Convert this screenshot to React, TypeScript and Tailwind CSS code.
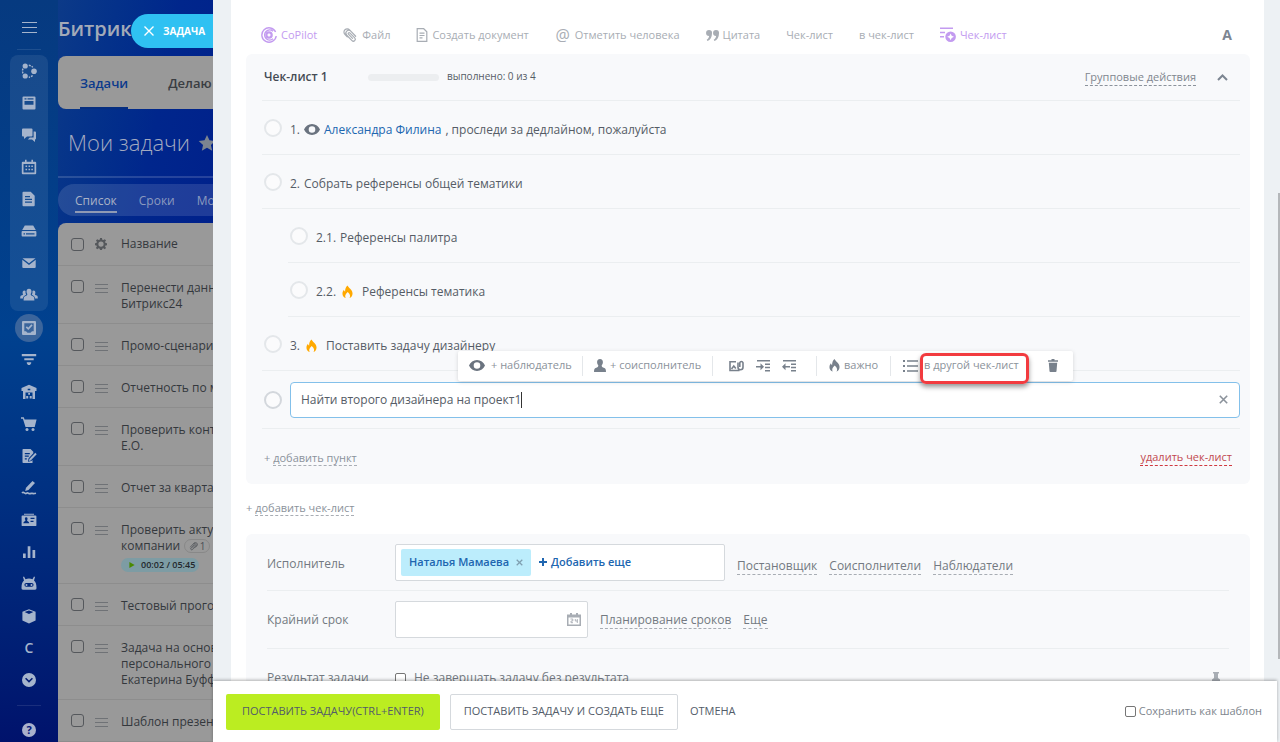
import type { ReactNode } from 'react';
import clsx from 'clsx';

type IconProps = { children: ReactNode; className?: string; size?: string };

function Icon({ children, className = 'size-4', size = '0 0 16 16' }: IconProps) {
  return (
    <svg viewBox={size} className={clsx('shrink-0', className)} fill="currentColor" aria-hidden="true">
      {children}
    </svg>
  );
}

/* Left menu glyphs */
const groupIcons = [
  {
    label: 'Лента',
    art: (
      <>
        <circle cx="4.2" cy="3" r="2.6" />
        <circle cx="13" cy="8.2" r="2.8" />
        <circle cx="4.2" cy="13" r="2.6" />
        <path d="M7.8 2.2a6 6 0 0 1 4 2.2M11.6 12.4a6 6 0 0 1-3.8 1.8M2 5.6a6 6 0 0 0 0 4.8" fill="none" stroke="currentColor" strokeWidth="1.4" strokeDasharray="2 1" />
      </>
    ),
  },
  {
    label: 'Доска',
    art: <path fillRule="evenodd" d="M2.5 1.5h11a1 1 0 0 1 1 1v11a1 1 0 0 1-1 1h-11a1 1 0 0 1-1-1v-11a1 1 0 0 1 1-1ZM3.5 3.3v1.2h2V3.3Zm3 0v1.2h6V3.3ZM3.5 6v3.8h9V6Z" />,
  },
  {
    label: 'Чат',
    art: <path d="M2 1.5h8.5a1 1 0 0 1 1 1v6a1 1 0 0 1-1 1H6L3 12V9.500H2a1 1 0 0 1-1-1v-6a1 1 0 0 1 1-1Zm10.600 3H14a1 1 0 0 1 1 1v6a1 1 0 0 1-1 1v2.500l-3-2.500H6.800l2-2h3.800Z" />,
  },
  {
    label: 'Календарь',
    art: <path fillRule="evenodd" d="M4 .8h1.600v2h4.800v-2H12v2h2.200a1 1 0 0 1 1 1v10.400a1 1 0 0 1-1 1H1.800a1 1 0 0 1-1-1V3.800a1 1 0 0 1 1-1H4ZM2.500 5v8.500h11V5ZM7.500 6.500h1.600V8H7.500Zm2.800 0h1.600V8h-1.600ZM4.500 9.800h1.600v1.500H4.500Zm3 0h1.600v1.500H7.500Zm2.800 0h1.600v1.500h-1.600ZM4.500 6.500h1.600V8H4.500Z" />,
  },
  {
    label: 'Документы',
    art: <path fillRule="evenodd" d="M2.500.8h7.200l4 4v9.400a1 1 0 0 1-1 1H2.500a1 1 0 0 1-1-1V1.800a1 1 0 0 1 1-1ZM4 5v1.200h5V5Zm0 2.800V9h7V7.800Zm0 2.800v1.200h7v-1.200Z" />,
  },
  {
    label: 'Диск',
    art: <path fillRule="evenodd" d="M3.800 2.500h8.400l2.600 4.500H1.200ZM1.500 8h13a.9.900 0 0 1 .9.900v3.700a.9.900 0 0 1-.9.900h-13a.9.900 0 0 1-.9-.9V8.900a.9.900 0 0 1 .9-.9Zm1 2.200v1.200h1.500v-1.200Zm2.500 0v1.200h8.500v-1.200Z" />,
  },
  {
    label: 'Почта',
    art: <path d="M1.500 3.200h13L8 8.300ZM1.300 4.700 8 9.900l6.700-5.200v7.400a1 1 0 0 1-1 1H2.300a1 1 0 0 1-1-1Z" />,
  },
  {
    label: 'Группы',
    art: (
      <path d="M8 1.800c1.700 0 2.600 1.200 2.500 2.900 0 1-.4 1.800-.8 2.400 0 1.200.3 1.500 2.300 2.200 1 .4 1.300 1 1.400 4.200H2.600c.1-3.200.4-3.800 1.400-4.200 2-.7 2.300-1 2.300-2.200-.4-.6-.8-1.400-.8-2.400 0-1.700.8-2.900 2.500-2.900ZM3.300 3.500c.6 0 1 .2 1.300.5-.3 1.300 0 2.600.6 3.600 0 .8-3 1-3.300 3.900H-.8c0-2.200.3-2.600 1-2.900 1.300-.5 1.800-.7 1.800-1.300-.5-.8-.8-3.800 1.300-3.800Zm9.400 0c-.6 0-1 .2-1.300.5.3 1.300 0 2.600-.6 3.600 0 .8 3 1 3.300 3.900h2.700c0-2.200-.3-2.600-1-2.900-1.300-.5-1.800-.7-1.800-1.300.5-.8.8-3.800-1.300-3.800Z" />
    ),
  },
];

const lowerIcons = [
  { label: 'CRM', art: <path d="M.8 2h14.400v2.200H.8Zm2.500 4.300h9.400v2H3.300Zm2.500 4h4.400v1L9 13H7l-1.200-1.700Z" /> },
  {
    label: 'Склад',
    art: <path fillRule="evenodd" d="M8 .8 15.500 4v3H14v8h-2.500V8.500h-7V15H2V7H.5V4Zm-1.300 4v1.500h2.600V4.800ZM7.200 9h1.800v1.800H7.200Zm-2 3h2v2.500h-2Zm3.500 0h2v2.500h-2Z" />,
  },
  {
    label: 'Магазин',
    art: (
      <>
        <path d="M0 1.200h2.800l.8 2.200h12L13.700 11H4.500L1.900 2.800H0Z" />
        <circle cx="6" cy="13.500" r="1.500" />
        <circle cx="12" cy="13.500" r="1.500" />
      </>
    ),
  },
  {
    label: 'Подпись',
    art: (
      <>
        <path fillRule="evenodd" d="M2.300 1h7.200l2.800 2.800v1.400L7.500 10.500 7 13.800l3.300-.8 1.200-1.100V15H2.300a.8.800 0 0 1-.8-.8V1.800a.8.800 0 0 1 .8-.8ZM3.800 5v1.200h5V5Zm0 2.600v1.200h4V7.600Zm0 2.600v1.200h2v-1.200Z" />
        <path d="m14.300 4.800 1.400 1.400-6 6.200-1.800.5.400-1.900Z" />
      </>
    ),
  },
  {
    label: 'КЭДО',
    art: (
      <>
        <path d="m11.500 1 2.500 2-6.500 7-3.300 1 .8-3.300Z" />
        <path d="M1 13c2-2 2.500 1.500 4.500.3s2 1 3.700.3 2.300.5 5.800-.4" fill="none" stroke="currentColor" strokeWidth="1.700" />
      </>
    ),
  },
  {
    label: 'Контакты',
    art: <path fillRule="evenodd" d="M3 1.800h10v1H3Zm-1.500 1.600h13a.9.900 0 0 1 .9.900v8.900a.9.900 0 0 1-.9.900h-13a.9.900 0 0 1-.9-.9V4.300a.9.900 0 0 1 .9-.9ZM5.200 5.300c-1.600 0-1.700 2-.7 3-.2 1.300-2 .9-2.200 3h5.900c-.2-2.100-2-1.700-2.200-3 1-1 .8-3-.8-3Zm4.300.5v1.300h4V5.800Zm0 3v1.300h3V8.800Z" />,
  },
  { label: 'Отчеты', art: <path d="M2 9.500h2.700V14H2Zm4.700-7.300h2.700V14H6.700ZM11.500 6h2.700v8h-2.700Z" /> },
  {
    label: 'Роботы',
    art: <path fillRule="evenodd" d="m3 .5 1.500 2.800a9 9 0 0 1 7 0L13 .5l1 .5-1 3.500c1.700 1.500 2.500 3.500 2.500 7.500a1.500 1.500 0 0 1-1.500 1.700H2A1.500 1.500 0 0 1 .5 12c0-4 .8-6 2.500-7.500L2 1Zm2.300 6.400a1.900 1.900 0 0 0 0 3.800h5.400a1.900 1.900 0 0 0 0-3.800Zm.2 1a1 1 0 1 1 0 2 1 1 0 0 1 0-2Zm5 0a1 1 0 1 1 0 2 1 1 0 0 1 0-2Z" />,
  },
  { label: 'Маркет', art: <path fillRule="evenodd" d="m8 1.200 6.600 2.500v8.700L8 15.400l-6.600-3V3.700Zm0 1.300L3.600 4.100 8 6l4.400-1.900Z" /> },
];

function SideButton({ label, children, active }: { label: string; children: ReactNode; active?: boolean }) {
  return (
    <button aria-label={label} className="flex h-8 w-full shrink-0 items-center justify-center">
      <span className={clsx('flex size-7 items-center justify-center rounded-full', active && 'bg-[#3b659c]')}>
        {children}
      </span>
    </button>
  );
}

function Sidebar() {
  return (
    <nav className="flex w-[58px] shrink-0 flex-col items-center overflow-hidden bg-linear-to-b from-[#063a80] via-[#00418f] via-45% to-[#00126c] text-[#a5b4cc]">
      <button aria-label="Меню" className="mt-[22px] flex w-[15px] shrink-0 flex-col gap-1">
        <span className="h-px w-full bg-current" />
        <span className="h-px w-full bg-current" />
        <span className="h-px w-full bg-current" />
      </button>
      <span className="mt-4 h-px w-6 shrink-0 bg-white/10" />
      <div className="mt-[5px] mb-px w-[38px] shrink-0 rounded-lg bg-white/8">
        {groupIcons.map((i) => (
          <SideButton key={i.label} label={i.label}>
            <Icon className="size-4 overflow-visible">{i.art}</Icon>
          </SideButton>
        ))}
      </div>
      <SideButton label="Задачи" active>
        <Icon>
          <path fillRule="evenodd" d="M2 1h12a1 1 0 0 1 1 1v12a1 1 0 0 1-1 1H2a1 1 0 0 1-1-1V2a1 1 0 0 1 1-1Zm1.300 2.200v8H5l1.500 1.600h3L11 11.200h1.700v-8Z" />
          <path d="m5.300 6.800 2 2L11 4.900" fill="none" stroke="currentColor" strokeWidth="1.700" />
        </Icon>
      </SideButton>
      {lowerIcons.map((i) => (
        <SideButton key={i.label} label={i.label}>
          <Icon className="size-4">{i.art}</Icon>
        </SideButton>
      ))}
      <SideButton label="Сайты">
        <span className="text-sm font-semibold">С</span>
      </SideButton>
      <SideButton label="Еще">
        <Icon className="size-[14px]">
          <path fillRule="evenodd" d="M8 0a8 8 0 1 1 0 16A8 8 0 0 1 8 0ZM3.500 6.500 8 11l4.500-4.500-1.200-1.200L8 8.600 4.700 5.300Z" />
        </Icon>
      </SideButton>
      <span className="my-[9px] h-px w-6 shrink-0 bg-white/10" />
      <button aria-label="Помощь" className="mt-2 flex size-[14px] shrink-0 items-center justify-center rounded-full bg-[#a9b1cc] text-[11px] font-bold text-[#00157a]">
        ?
      </button>
    </nav>
  );
}

const tasks = [
  { lines: ['Перенести данн', 'Битрикс24'] },
  { lines: ['Промо-сценари'] },
  { lines: ['Отчетность по м'] },
  { lines: ['Проверить конт', 'Е.О.'] },
  { lines: ['Отчет за кварта'] },
  { lines: ['Проверить акту', 'компании'], timer: true },
  { lines: ['Тестовый прого'] },
  { lines: ['Задача на основ', 'персонального', 'Екатерина Буфф'] },
  { lines: ['Шаблон презен'] },
];

function GrayCheck({ label }: { label: string }) {
  return (
    <input
      type="checkbox"
      aria-label={label}
      className="size-[13px] shrink-0 appearance-none rounded-[3px] border border-[#55585c]"
    />
  );
}

function PaperClip({ className }: { className?: string }) {
  return (
    <Icon className={className}>
      <path
        d="M13.500 8.800 8.300 3.400a3 3 0 0 0-4.300 4.300l5.600 5.700a2 2 0 0 0 2.900-2.900L7.200 5.200a.9.900 0 0 0-1.400 1.400l4.400 4.500M8.300 3.400 7 2a3.400 3.400 0 0 0-5 4.800l2.500 2.600"
        fill="none"
        stroke="currentColor"
        strokeWidth="1.300"
        strokeLinecap="round"
      />
    </Icon>
  );
}

function TaskList() {
  return (
    <div className="w-[155px] shrink-0 overflow-hidden bg-linear-to-br from-[#0c3a88] via-[#00268c] via-40% to-[#00188a] whitespace-nowrap">
      <div className="h-14 pt-[15px] text-xl leading-7 font-semibold text-[#a3aab8]">Битрикс24</div>
      <div className="flex h-[53px] rounded-l-lg bg-[#999] text-[13px] font-semibold">
        <a href="#tasks" className="ml-[22px] flex items-center border-b-2 border-[#062e80] pt-1 text-[#0b3a8c]">
          Задачи
        </a>
        <a href="#doing" className="ml-10 flex items-center border-b-2 border-transparent pt-1 text-[#3a3d42]">
          Делаю
        </a>
      </div>
      <div className="flex h-[69px] items-center gap-2 border-b-2 border-white/15 pl-[10px]">
        <h1 className="text-[22px] font-light text-[#a3aac0]">Мои задачи</h1>
        <Icon className="size-[18px] text-[#7b8490]">
          <path d="m8 .8 2.200 4.800 5.200.6-3.900 3.500 1.100 5.200L8 12.300l-4.600 2.600 1.100-5.200L.6 6.200l5.200-.6Z" />
        </Icon>
      </div>
      <div className="mt-1.5 flex h-8 items-center gap-[22px] rounded-l-full bg-white/12 pt-1 pl-[17px] text-xs leading-5 text-[#8b9abf]">
        <a href="#list" className="border-b-2 border-[#8f9ab5] text-[#a9b2c6]">
          Список
        </a>
        <a href="#terms" className="border-b-2 border-transparent">
          Сроки
        </a>
        <a href="#plan" className="border-b-2 border-transparent">
          Мой план
        </a>
      </div>
      <div className="mt-[7px] rounded-tl-lg bg-[#999] text-xs leading-4 text-[#34383d]">
        <div className="flex h-[43px] items-center border-b border-[#8d8d8d] pl-[13px]">
          <GrayCheck label="Выбрать все" />
          <Icon className="ml-[11px] size-3 text-[#55585c]">
            <path fillRule="evenodd" d="M6.700 0h2.600l.4 2.200 1.500.6L13 1.500 14.700 3.300l-1.300 1.800.6 1.500 2 .4v2.500l-2 .4-.6 1.500 1.300 1.800-1.800 1.700-1.800-1.200-1.500.6-.3 2H6.700l-.4-2-1.500-.6L3 15l-1.800-1.800 1.300-1.800-.6-1.500-1.900-.4V7l1.900-.4.600-1.500L1.300 3.300 3 1.500l1.800 1.300 1.500-.6ZM8 4.600a3.500 3.500 0 1 0 0 7 3.500 3.500 0 0 0 0-7Z" />
          </Icon>
          <span className="ml-[14px]">Название</span>
        </div>
        {tasks.map((task) => (
          <div key={task.lines[0]} className="flex items-start border-b border-[#8d8d8d] pt-[14px] pb-[11px] pl-[13px]">
            <GrayCheck label={task.lines[0]} />
            <span className="mt-[4px] ml-[11px] flex w-[13px] shrink-0 flex-col gap-[3px] text-[#6f7276]">
              <span className="h-px bg-current" />
              <span className="h-px bg-current" />
              <span className="h-px bg-current" />
            </span>
            <div className="ml-[13px]">
              {task.lines.map((line, i) => (
                <div key={line} className="flex items-center gap-1">
                  {line}
                  {task.timer && i === 1 && (
                    <span className="flex h-[14px] w-[26px] items-center justify-center gap-0.5 rounded-full border border-[#888] text-[10px] text-[#4b4f55]">
                      <PaperClip className="size-[9px] -scale-x-100" />1
                    </span>
                  )}
                </div>
              ))}
              {task.timer && (
                <span className="mt-1 flex h-[14px] w-[78px] items-center gap-1.5 rounded-full bg-[#7d9ca4] pl-2 text-[9px] font-semibold text-[#23282c]">
                  <Icon className="size-[6px] text-[#4a8a00]">
                    <path d="M1 0v16l14-8Z" />
                  </Icon>
                  00:02 / 05:45
                </span>
              )}
            </div>
          </div>
        ))}
      </div>
    </div>
  );
}

function Eye() {
  return (
    <Icon className="h-[11px] w-4 text-[#6a737f]" size="0 0 16 11">
      <path fillRule="evenodd" d="M8 0c3.700 0 6.500 2.300 8 5.500C14.500 8.700 11.700 11 8 11S1.500 8.700 0 5.500C1.500 2.300 4.300 0 8 0Zm0 2.200a3.300 3.300 0 1 0 0 6.600 3.300 3.300 0 0 0 0-6.600Z" />
    </Icon>
  );
}

function Flame({ className }: { className: string }) {
  return (
    <Icon className={className} size="0 0 12 14">
      <path d="M6.200 0c.3 2.400 5.300 4.400 5.300 8.600 0 2.500-1.400 4.300-3.400 5 1.200-1.500 1.300-3.700-1.900-6.600C3.300 9.600 3 12 4.100 13.600 2 13 .5 11.200.5 8.800c0-2 1-3.100 1.600-4.200.3 1.300.7 1.700 1.300 2C3.300 4.200 4.200 1.200 6.200 0Z" />
    </Icon>
  );
}

function Toolbar() {
  return (
    <div className="flex h-[54px] shrink-0 items-center gap-[26px] pt-4 pr-[18px] pl-[15px] text-[11px] whitespace-nowrap text-[#a8adb4]">
      <button className="flex items-center gap-1 text-[#c39bf0]">
        <Icon>
          <path d="M14.600 5A7.200 7.200 0 1 0 15.200 9M12 4.300A5 5 0 1 0 12 11.700" fill="none" stroke="currentColor" strokeWidth="1.400" />
          <path fillRule="evenodd" d="M8 4.200a3.800 3.800 0 1 1 0 7.600 3.800 3.800 0 0 1 0-7.600Zm0 1.500L7.200 7.200 5.700 8l1.500.8L8 10.300l.8-1.500 1.500-.8-1.500-.8Z" />
        </Icon>
        CoPilot
      </button>
      <button className="flex items-center gap-1">
        <PaperClip className="size-[15px]" />
        Файл
      </button>
      <button className="flex items-center gap-1">
        <Icon className="h-[14px] w-3" size="0 0 12 14">
          <path d="M1.200.7h6.500l3.100 3v9.600H1.200ZM3.500 5.200h5M3.500 7.500h5M3.500 9.800h3" fill="none" stroke="currentColor" strokeWidth="1.200" />
        </Icon>
        Создать документ
      </button>
      <button className="flex items-center gap-1">
        <span className="w-4 text-base leading-4">@</span>
        Отметить человека
      </button>
      <button className="flex items-center gap-1">
        <Icon className="h-[11px] w-[13px]" size="0 0 13 11">
          <path d="M3 0a3 3 0 0 1 3 3.200C6 7 4.300 10 1.500 11L.7 9.700C2.300 8.800 3 7.500 3.100 6A3 3 0 0 1 3 0Zm7 0a3 3 0 0 1 3 3.200C13 7 11.300 10 8.500 11l-.8-1.300C9.300 8.800 10 7.500 10.100 6A3 3 0 0 1 10 0Z" />
        </Icon>
        Цитата
      </button>
      <button>Чек-лист</button>
      <button>в чек-лист</button>
      <button className="flex items-center gap-1 text-[#c39bf0]">
        <Icon>
          <path d="M0 .5h13V2H0Zm0 4.300h5v1.500H0ZM0 9h4v1.500H0Z" />
          <path fillRule="evenodd" d="M10.600 4.500a5.300 5.300 0 1 1 0 10.600 5.300 5.300 0 0 1 0-10.600Zm0 1.900L9.500 8.700l-2.300 1.100 2.300 1.100 1.100 2.300 1.100-2.300L14 9.800l-2.300-1.100Z" />
        </Icon>
        Чек-лист
      </button>
      <button className="ml-auto text-sm font-bold text-[#7c8591]">А</button>
    </div>
  );
}

function Ring({ label, dark }: { label: string; dark?: boolean }) {
  return (
    <input
      type="checkbox"
      aria-label={label}
      className={clsx(
        'size-[18px] shrink-0 appearance-none rounded-full border-2 bg-white/40',
        dark ? 'border-[#d3d7dc]' : 'border-[#e4e7ea]',
      )}
    />
  );
}

function CheckItem({ num, nested, children }: { num: string; nested?: boolean; children: ReactNode }) {
  return (
    <div className={clsx('flex h-[54px] items-center border-b border-[#ebeef0] pl-[2px]', nested && 'ml-[26px]')}>
      <Ring label={'Пункт ' + num} />
      <div className="ml-2 flex items-center gap-1 pt-1">
        <span>{num}</span>
        {children}
      </div>
    </div>
  );
}

const dashed = 'border-b border-dashed';

function ItemMenu() {
  return (
    <div className="absolute bottom-[37px] left-[168px] flex h-[30px] w-[615px] items-center rounded-xs bg-white text-[11px] whitespace-nowrap text-[#8b929b] shadow-[0_1px_4px_rgba(0,0,0,0.15)]">
      <button className="flex h-5 w-[125px] items-center gap-1.5 border-r border-[#e4e7ea] pl-[11px]">
        <Eye />+ наблюдатель
      </button>
      <button className="flex h-5 w-[130px] items-center gap-1 border-r border-[#e4e7ea] pl-[11px]">
        <Icon className="h-[13px] w-3 text-[#78818c]" size="0 0 12 13">
          <path d="M6 0c2 0 3 1.300 2.900 3.200 0 1.300-.6 2.300-1.200 3 0 1.800.5 2 2.700 2.800 1.200.5 1.500 1.200 1.600 4H0c.1-2.800.4-3.500 1.600-4 2.200-.8 2.700-1 2.700-2.800-.6-.7-1.200-1.700-1.200-3C3 1.300 4 0 6 0Z" />
        </Icon>
        + соисполнитель
      </button>
      <div className="flex h-5 w-[104px] items-center gap-3 border-r border-[#e4e7ea] pl-4 text-[#78818c]">
        <button aria-label="Прикрепить файл">
          <Icon className="h-3 w-[15px]" size="0 0 15 12">
            <path d="M7 1.800H1v8.700h9.500M2.500 9l2.300-3 2 2.500M9 2.500v4.800a2.500 2.500 0 0 0 5 0V2.700a1.700 1.700 0 0 0-3.200 0V7" fill="none" stroke="currentColor" strokeWidth="1.600" />
          </Icon>
        </button>
        <button aria-label="Увеличить отступ">
          <Icon className="h-3 w-[14px]" size="0 0 14 12">
            <path d="M1 0h13v1.500H1Zm8 3.500h5V5H9Zm0 3.300h5v1.500H9Zm0 3.300h5v1.500H9ZM4.500 3.200 8 6.700l-3.500 3.500V7.500H0V6h4.500Z" />
          </Icon>
        </button>
        <button aria-label="Уменьшить отступ">
          <Icon className="h-3 w-[14px]" size="0 0 14 12">
            <path d="M1 0h13v1.500H1Zm8 3.500h5V5H9Zm0 3.300h5v1.500H9Zm0 3.300h5v1.500H9ZM3.500 3.200 0 6.700l3.500 3.500V7.500H8V6H3.500Z" />
          </Icon>
        </button>
      </div>
      <button className="flex h-5 w-[74px] items-center gap-1 border-r border-[#e4e7ea] pl-3">
        <Flame className="h-[13px] w-[11px] text-[#78818c]" />
        важно
      </button>
      <button className="flex items-center gap-1.5 pl-3">
        <Icon className="h-3 w-[15px] text-[#78818c]" size="0 0 15 12">
          <path d="M0 0h2v2H0Zm4 .2h11v1.500H4ZM0 5h2v2H0Zm4 .2h11v1.500H4ZM0 10h2v2H0Zm4 .2h11v1.500H4Z" />
        </Icon>
        <span className="relative">
          в другой чек-лист
          <span className="absolute -top-[5px] -right-[10px] -bottom-[11px] -left-1 rounded-md border-3 border-[#f23b3f] shadow-[0_3px_5px_rgba(0,0,0,0.4)]" />
        </span>
      </button>
      <button aria-label="Удалить" className="mr-[15px] ml-auto text-[#78818c]">
        <Icon className="h-[13px] w-[10px]" size="0 0 10 13">
          <path d="M3.500 0h3v1.200H10v1.600H0V1.200h3.500ZM.8 3.800h8.400l-.7 8.400a.9.900 0 0 1-.9.800H2.400a.9.900 0 0 1-.9-.8Z" />
        </Icon>
      </button>
    </div>
  );
}

function Checklist() {
  return (
    <section className="shrink-0 rounded-md bg-[#f8f9fb] pr-[10px] pb-[18px] pl-4 text-xs text-[#555c66]">
      <div className="flex h-[47px] items-center border-b border-[#ebeef0] pr-3 pl-[2px]">
        <h2 className="w-[104px] font-semibold whitespace-nowrap text-[#454b54]">Чек-лист 1</h2>
        <span className="h-[7px] w-[71px] rounded-full bg-[#eceef0]" />
        <span className="ml-2 text-[10px]">выполнено: 0 из 4</span>
        <button className={clsx(dashed, 'ml-auto border-[#8b929b] text-[11px] leading-4 text-[#80868e]')}>
          Групповые действия
        </button>
        <button aria-label="Свернуть" className="ml-[21px]">
          <Icon className="h-[7px] w-[11px] text-[#7c8591]" size="0 0 11 7">
            <path d="M1 6 5.500 1.500 10 6" fill="none" stroke="currentColor" strokeWidth="2" />
          </Icon>
        </button>
      </div>
      <CheckItem num="1.">
        <Eye />
        <a href="#user" className="text-[#2066b0]">
          Александра Филина
        </a>
        <span>, проследи за дедлайном, пожалуйста</span>
      </CheckItem>
      <CheckItem num="2.">Собрать референсы общей тематики</CheckItem>
      <CheckItem num="2.1." nested>
        Референсы палитра
      </CheckItem>
      <CheckItem num="2.2." nested>
        <Flame className="mx-0.5 h-[14px] w-[11px] text-[#ffa900]" />
        <span className="ml-[3px]">Референсы тематика</span>
      </CheckItem>
      <CheckItem num="3.">
        <Flame className="mx-0.5 h-[14px] w-[11px] text-[#ffa900]" />
        <span className="ml-[3px]">Поставить задачу дизайнеру</span>
      </CheckItem>
      <div className="relative flex h-[58px] items-center border-b border-[#ebeef0] pl-[2px]">
        <Ring label="Пункт 4" dark />
        <div className="relative ml-2 flex h-9 flex-1 items-center rounded-sm border border-[#83c0ea] bg-white pr-[11px] pl-[10px]">
          <input
            aria-label="Текст пункта"
            defaultValue="Найти второго дизайнера на проект1"
            className="field-sizing-content min-w-0 bg-transparent outline-none"
          />
          <span className="h-4 w-px bg-[#333]" />
          <button aria-label="Очистить" className="ml-auto">
            <Icon className="size-[9px] text-[#8b929b]" size="0 0 9 9">
              <path d="m.8.800 7.400 7.400M8.200.8.800 8.200" stroke="currentColor" strokeWidth="1.600" />
            </Icon>
          </button>
          <span className="absolute bottom-[-1px] left-[-1px]">
            <ItemMenu />
          </span>
        </div>
      </div>
      <div className="flex items-center justify-between pt-5 pr-2 pl-[2px] text-[11px] leading-4">
        <button className="text-[#8b929b]">
          + <span className={clsx(dashed, 'border-[#a8adb4]')}>добавить пункт</span>
        </button>
        <button className={clsx(dashed, 'border-[#d0383f] text-[#c2494f]')}>удалить чек-лист</button>
      </div>
    </section>
  );
}

function FieldLink({ children }: { children: ReactNode }) {
  return (
    <a href="#field" className={clsx(dashed, 'border-[#a8adb4] leading-4 text-[#737981]')}>
      {children}
    </a>
  );
}

function Fields() {
  return (
    <section className="flex-1 rounded-md bg-[#f8f9fb] px-[21px] text-xs whitespace-nowrap text-[#737981]">
      <div className="flex h-[57px] items-center border-b border-[#ebeef0]">
        <span className="w-32 pt-1">Исполнитель</span>
        <div className="mr-3 flex h-[37px] w-[330px] items-center rounded-xs border border-[#d5d9dd] bg-white pl-[5px] text-[11px] font-semibold text-[#2066b0]">
          <span className="flex h-[27px] items-center gap-[7px] rounded-xs bg-[#bcedfc] px-2">
            Наталья Мамаева
            <button aria-label="Убрать">
              <Icon className="size-[7px] text-[#7f9fb0]" size="0 0 8 8">
                <path d="m.8.800 6.400 6.400M7.200.8.800 7.200" stroke="currentColor" strokeWidth="1.400" />
              </Icon>
            </button>
          </span>
          <button className="ml-2 flex items-center gap-1">
            <Icon className="size-2" size="0 0 8 8">
              <path d="M3 0h2v3h3v2H5v3H3V5H0V3h3Z" />
            </Icon>
            Добавить еще
          </button>
        </div>
        <div className="flex gap-3 pt-2">
          <FieldLink>Постановщик</FieldLink>
          <FieldLink>Соисполнители</FieldLink>
          <FieldLink>Наблюдатели</FieldLink>
        </div>
      </div>
      <div className="flex h-[58px] items-center border-b border-[#ebeef0]">
        <label htmlFor="deadline" className="w-32">
          Крайний срок
        </label>
        <div className="mr-3 flex h-[37px] w-[193px] items-center rounded-xs border border-[#d5d9dd] bg-white pr-1.5">
          <input id="deadline" className="min-w-0 flex-1 bg-transparent px-2 outline-none" />
          <Icon className="h-[13px] w-[14px] text-[#a8adb4]" size="0 0 14 13">
            <path fillRule="evenodd" d="M3 0h2v1.500h4V0h2v1.500h3V13H0V1.500h3ZM1.500 4.500v7h11v-7Z" />
            <path d="M3.500 6h2.300v2H4v1.700h2M8.300 6v2h2.500m-.5-2v4" fill="none" stroke="currentColor" strokeWidth=".9" />
          </Icon>
        </div>
        <div className="flex gap-3 pt-0.5">
          <FieldLink>Планирование сроков</FieldLink>
          <FieldLink>Еще</FieldLink>
        </div>
      </div>
      <div className="flex h-[58px] items-center">
        <span className="w-32">Результат задачи</span>
        <label className="flex items-center gap-2">
          <input type="checkbox" className="size-[11px] appearance-none rounded-xs border border-[#767676] bg-white" />
          Не завершать задачу без результата
        </label>
        <Icon className="mr-[9px] ml-auto h-[13px] w-2 text-[#a8adb4]" size="0 0 8 13">
          <path d="M1 0h6v1.500H6V6l2 1.500V9H4.500v4h-1V9H0V7.500L2 6V1.500H1Z" />
        </Icon>
      </div>
    </section>
  );
}

function Footer() {
  return (
    <footer className="relative z-10 mr-[3px] flex h-[61px] shrink-0 items-center bg-white pr-[15px] pl-[13px] text-[11px] font-medium whitespace-nowrap text-[#535c69] shadow-[0_-1px_3px_rgba(0,0,0,0.3)]">
      <button className="h-9 rounded-xs bg-[#bbed21] px-4">ПОСТАВИТЬ ЗАДАЧУ(CTRL+ENTER)</button>
      <button className="ml-[10px] h-9 rounded-xs border border-[#d5d9dd] px-[13px]">ПОСТАВИТЬ ЗАДАЧУ И СОЗДАТЬ ЕЩЕ</button>
      <button className="ml-3">ОТМЕНА</button>
      <label className="ml-auto flex items-center gap-[3px] font-normal text-[#80868e]">
        <input type="checkbox" className="size-[11px] appearance-none rounded-xs border border-[#767676] bg-white" />
        Сохранить как шаблон
      </label>
    </footer>
  );
}

export default function App() {
  return (
    <div className="relative flex h-screen overflow-hidden font-['Open_Sans','Noto_Sans',sans-serif]">
      <Sidebar />
      <TaskList />

      {/* Slider label hanging over the page behind */}
      <button className="absolute top-[14px] left-[131px] flex h-[34px] w-[82px] items-center gap-[9px] rounded-l-full bg-[#2fc1f2] pl-[13px] text-[10px] font-bold text-white">
        <Icon className="size-[10px]" size="0 0 10 10">
          <path d="m.5.500 9 9m0-9-9 9" stroke="currentColor" strokeWidth="1.400" />
        </Icon>
        ЗАДАЧА
      </button>

      <main className="relative flex min-w-0 flex-1 flex-col bg-[#edf1f4]">
        <div className="mr-4 ml-[18px] flex min-h-0 flex-1 flex-col overflow-hidden bg-white pr-[14px] pl-[15px]">
          <Toolbar />
          <Checklist />
          <button className="shrink-0 pt-4 pb-[18px] text-left text-[11px] leading-4 text-[#8b929b]">
            + <span className={clsx(dashed, 'border-[#a8adb4]')}>добавить чек-лист</span>
          </button>
          <Fields />
        </div>
        <Footer />
        <span className="absolute top-[193px] right-0 h-[466px] w-0.5 bg-[#b4b7ba]" />
      </main>
    </div>
  );
}
